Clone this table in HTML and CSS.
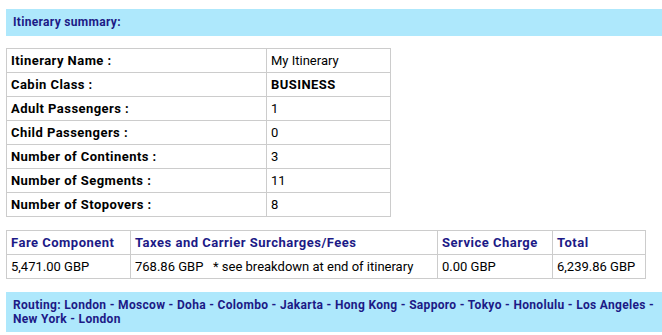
FILE: index.html
```html
<!DOCTYPE html>
<html>
<head>
<meta charset="utf-8">
<link rel="stylesheet" href="styles.css">
</head>
<body>
<div class="page">
  <div class="bar bar-title">Itinerary summary:</div>

  <table class="summary">
    <tr><th>Itinerary Name :</th><td>My Itinerary</td></tr>
    <tr><th>Cabin Class :</th><td class="strong">BUSINESS</td></tr>
    <tr><th>Adult Passengers :</th><td>1</td></tr>
    <tr><th>Child Passengers :</th><td>0</td></tr>
    <tr><th>Number of Continents :</th><td>3</td></tr>
    <tr><th>Number of Segments :</th><td>11</td></tr>
    <tr><th>Number of Stopovers :</th><td>8</td></tr>
  </table>

  <table class="fare">
    <tr>
      <th class="c1">Fare Component</th>
      <th class="c2">Taxes and Carrier Surcharges/Fees</th>
      <th class="c3">Service Charge</th>
      <th class="c4">Total</th>
    </tr>
    <tr>
      <td>5,471.00 GBP</td>
      <td>768.86 GBP &nbsp; * see breakdown at end of itinerary</td>
      <td>0.00 GBP</td>
      <td>6,239.86 GBP</td>
    </tr>
  </table>

  <div class="bar bar-routing">Routing: London - Moscow - Doha - Colombo - Jakarta - Hong Kong - Sapporo - Tokyo - Honolulu - Los Angeles - New York - London</div>
</div>
</body>
</html>
```
FILE: styles.css
```css
html, body {
  margin: 0;
  padding: 0;
  background: #ffffff;
}
body {
  font-family: Roboto, "Liberation Sans", Arial, sans-serif;
  color: #000;
}
.page {
  padding: 9px 0 0 6px;
  display: flex;
  flex-direction: column;
  align-items: flex-start;
}
.bar {
  align-self: stretch;
  background: #aee8fc;
  color: #1c1a86;
  font-weight: bold;
  font-size: 12px;
  letter-spacing: 0.32px;
  box-sizing: border-box;
}
.bar-title {
  height: 27px;
  line-height: 27px;
  padding: 0 7px;
}
.summary, .fare {
  border-collapse: collapse;
  font-size: 13px;
}
.summary {
  margin-top: 12px;
  width: 385px;
}
.summary th, .summary td,
.fare th, .fare td {
  border: 1px solid #cccccc;
  height: 23px;
  padding: 0 4px;
  text-align: left;
  vertical-align: middle;
  white-space: nowrap;
}
.summary th {
  width: 251px;
  font-weight: bold;
  letter-spacing: 0.45px;
}
.summary td {
  font-weight: normal;
}
.summary td.strong {
  font-weight: bold;
  letter-spacing: 0.45px;
}
.fare {
  margin-top: 13px;
  width: 640px;
}
.fare th {
  color: #1c1a86;
  font-weight: bold;
  letter-spacing: 0.5px;
}
.fare .c1 { width: 115px; }
.fare .c2 { width: 298px; }
.fare .c3 { width: 106px; }
.bar-routing {
  margin-top: 13px;
  padding: 6px 7px 6px;
  line-height: 14px;
  min-height: 40px;
}
```
